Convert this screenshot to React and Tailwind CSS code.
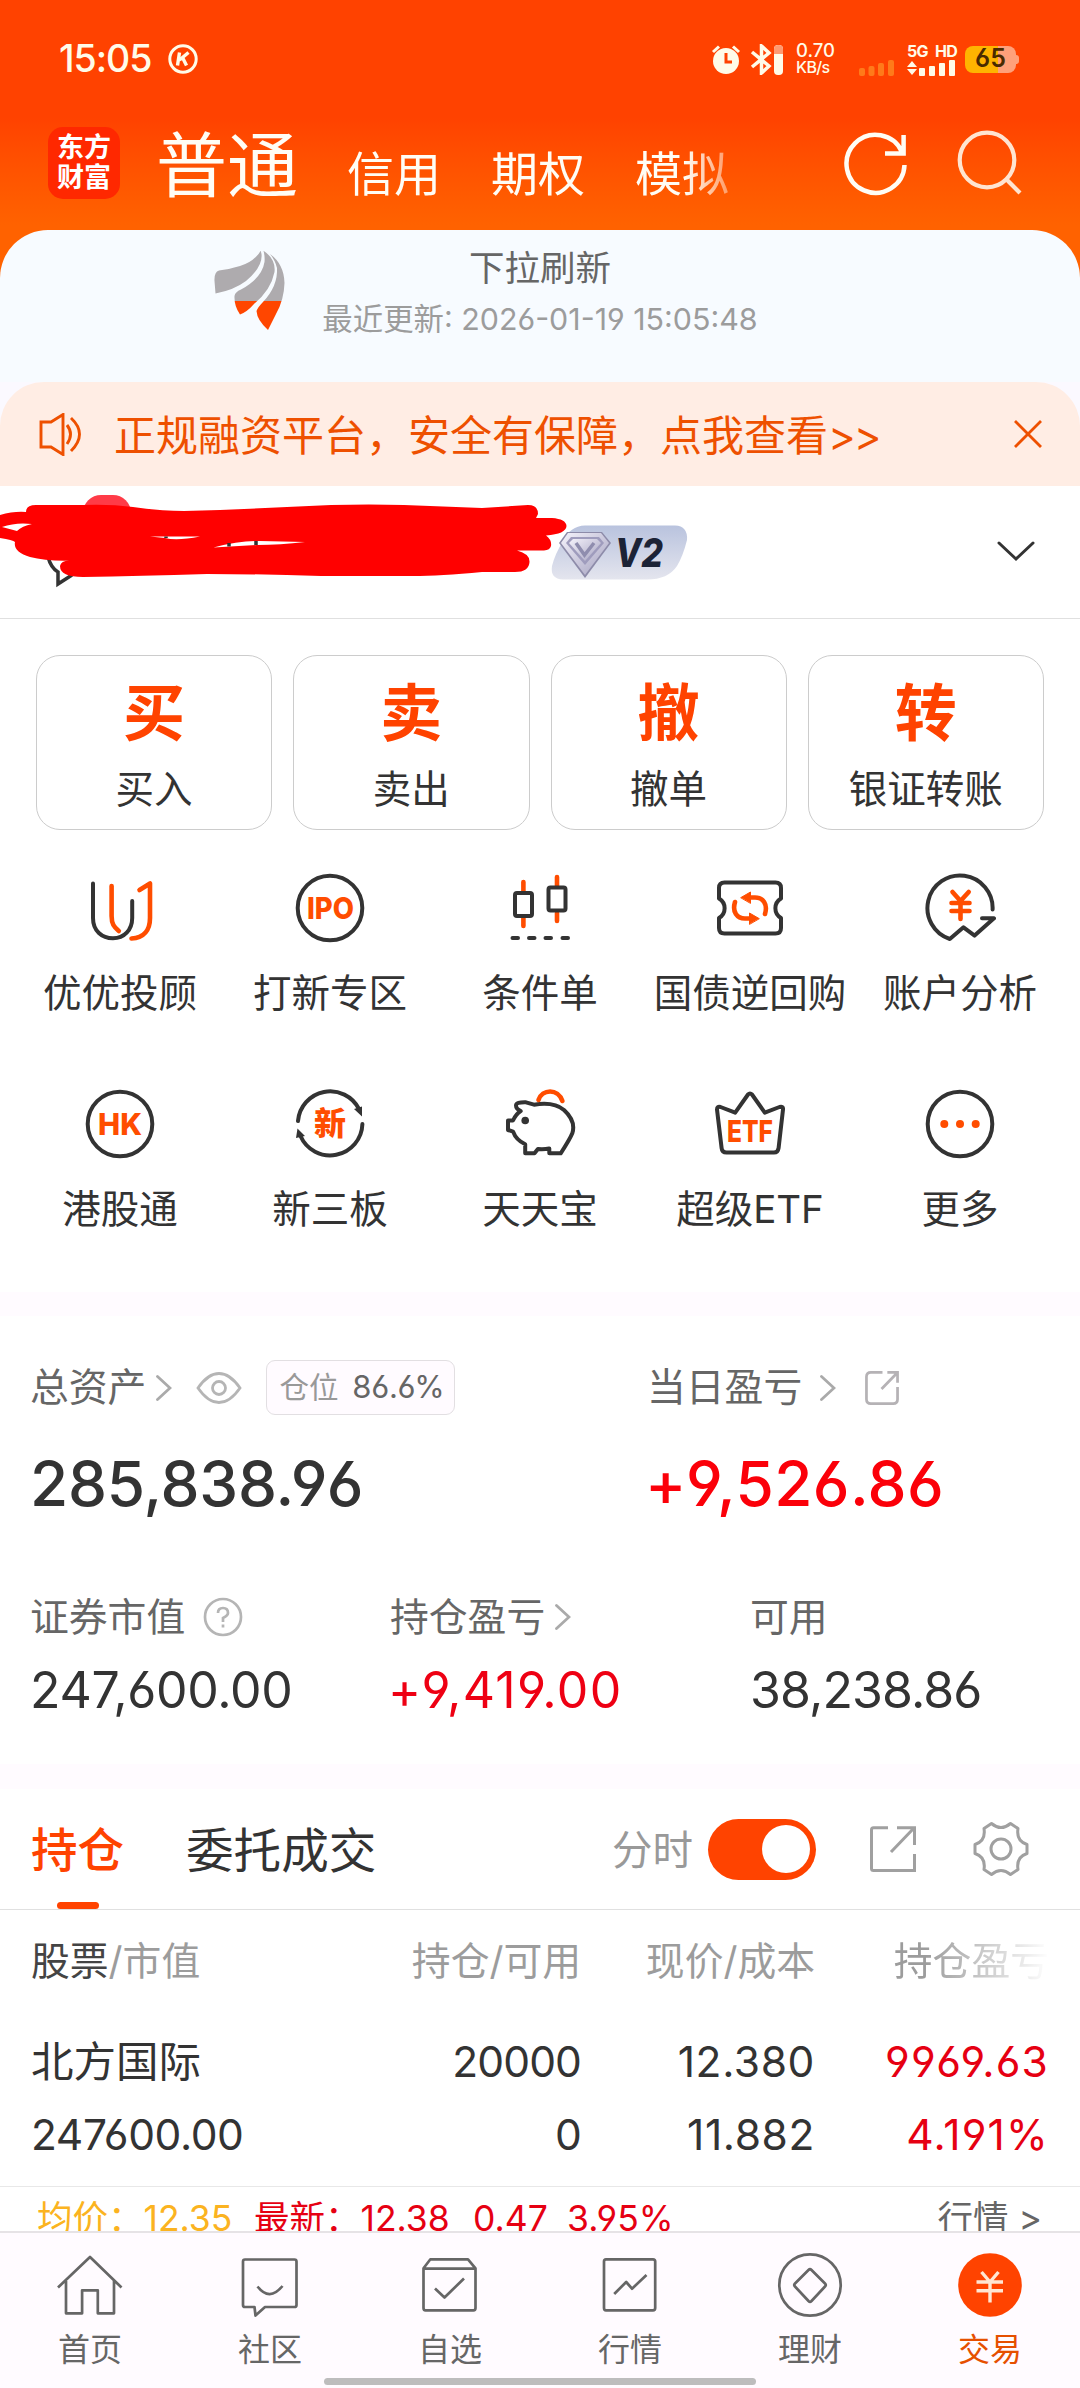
import { useState } from "react";

const dark = { fill: "none", stroke: "#333", strokeWidth: 4, strokeLinecap: "round", strokeLinejoin: "round" };
const hot = { fill: "none", stroke: "#ff4d00", strokeWidth: 4.6, strokeLinecap: "round", strokeLinejoin: "round" };
const hotText = { fill: "#ff4d00", textAnchor: "middle", fontWeight: 800, lengthAdjust: "spacingAndGlyphs" };

const menuIcons = {
    youyou: (
        <>
            <path {...dark} d="M9 11.5V46C9 59 18 66.3 29 66.3S48.2 58 48.2 46V29" />
            <path {...hot} d="M27.6 14V44C27.6 52 30 55 34.8 59M55.5 18L66 11.5V46C66 58 60 66 47.5 66.5" />
        </>
    ),
    ipo: (
        <>
            <circle {...dark} cx="36" cy="36" r="32.3" />
            <text {...hotText} x="36.500" y="47" fontSize="30" textLength="47">IPO</text>
        </>
    ),
    candle: (
        <>
            <path {...hot} d="M19.4 10V19M19.4 46V54M53 5V14M53 41V49" />
            <rect {...dark} x="11" y="21" width="17" height="23" rx="2" />
            <rect {...dark} x="44.5" y="15.5" width="17" height="23" rx="2" />
            <path {...dark} d="M8.5 66H14M25 66H30.5M41.5 66H47M58.5 66H64" />
        </>
    ),
    bond: (
        <>
            <path {...dark} d="M10.5 10.5H61.5Q67 10.5 67 16V26.5C59.5 31 59.5 41.5 67 46V56Q67 61.5 61.5 61.5H10.5Q5 61.5 5 56V46C12.5 41.5 12.5 31 5 26.5V16Q5 10.5 10.5 10.5Z" />
            <path {...hot} d="M51 42C54 32 49 25.5 41 25.5H34M21 30C18 40 23 46.5 31 46.5H38" />
            <path {...hot} strokeWidth="1" fill="#ff4d00" d="M27 25.5L36.5 20V31ZM45 46.5L35.5 41V52Z" />
        </>
    ),
    account: (
        <>
            <path {...dark} d="M68.6 37.5A32.6 32.6 0 1 0 25.8 67L39.5 55.3L50.6 63.6L70 46.3H58" />
            <path {...hot} d="M28.5 20L36.5 29L44.7 20M36.5 29V47M27.5 31H45.5M27.5 39H45.5" />
        </>
    ),
    hk: (
        <>
            <circle {...dark} cx="36" cy="36" r="32.3" />
            <text {...hotText} x="36" y="47" fontSize="30" textLength="44">HK</text>
        </>
    ),
    xin: (
        <>
            <path {...dark} d="M4 33A32.3 32.3 0 0 1 65 21M68.4 36A32.3 32.3 0 0 1 6.5 48" />
            <path fill="#333" d="M60 21L68 18.5L68 28.5ZM3.5 40.5L2 50L11 48Z" />
            <text {...hotText} x="36" y="47" fontSize="32">新</text>
        </>
    ),
    pig: (
        <>
            <path {...dark} d="M12 17.5Q12 14 22 14.3L30 16.7Q50 13.5 60 22Q72 33 68.4 45Q66 51 56.7 65.3H45.3V60.5Q40 61.5 33.9 61L30.5 65.3H21.2V56.3Q12 52 9.1 43.7L4 42V32.5H9Q12 26 16.7 23Q12 21 12 17.5Z" />
            <circle cx="21.2" cy="32.5" r="3.8" fill="#333" />
            <path {...hot} d="M34.5 12C38 1 54 0 58.4 13" />
        </>
    ),
    etf: (
        <>
            <path {...dark} d="M7.6 60L3 21.5Q3 18 6.5 19L21.2 24.7L34 6.5Q36 4.5 38 6.5L50.8 24.7L65.5 19Q69.5 18 69 21.5L64.6 60Q64 64.5 60 64.5H12.5Q8 64.5 7.6 60Z" />
            <text {...hotText} x="36" y="53.5" fontSize="30" textLength="46">ETF</text>
        </>
    ),
    more: (
        <>
            <circle {...dark} cx="36" cy="36" r="32.3" />
            <g fill="#ff4d00">
                <circle cx="20.3" cy="36" r="4" />
                <circle cx="36" cy="36" r="4" />
                <circle cx="51.7" cy="36" r="4" />
            </g>
        </>
    ),
};

const menu = [
    ["youyou", "优优投顾"],
    ["ipo", "打新专区"],
    ["candle", "条件单"],
    ["bond", "国债逆回购"],
    ["account", "账户分析"],
    ["hk", "港股通"],
    ["xin", "新三板"],
    ["pig", "天天宝"],
    ["etf", "超级ETF"],
    ["more", "更多"],
];

const actions = [
    ["买", "买入"],
    ["卖", "卖出"],
    ["撤", "撤单"],
    ["转", "银证转账"],
];

const navLine = { fill: "none", stroke: "#666", strokeWidth: 2.7, strokeLinejoin: "round" };

const navItems = [
    { label: "首页", icon: <path {...navLine} d="M4 38.5L36 8L67.5 38.5M12 32V64.3H28.1V41.3H43.8V64.3H60V32" /> },
    { label: "社区", icon: <path {...navLine} d="M11 10.5H60.5Q62.5 10.5 62.5 12.5V56Q62.5 58 60.5 58H31L21.5 66.5L20.5 58H11Q9 58 9 56V12.5Q9 10.5 11 10.5ZM23.5 37.5Q35.5 53 48.5 37" /> },
    { label: "自选", icon: <path {...navLine} d="M9.5 19.3L16.4 10.3H54L61.5 19.3V59Q61.5 61.3 59.5 61.3H11.5Q9.5 61.3 9.5 59ZM9.5 19.6H61.5M21 39.5L30.5 48.5L50 29.5" /> },
    { label: "行情", icon: <path {...navLine} d="M12 10.3H59Q61.2 10.3 61.2 12.5V59Q61.2 61.3 59 61.3H12Q10 61.3 10 59V12.5Q10 10.3 12 10.3ZM20.2 45L32.2 33L38 39.7L52.5 26" /> },
    { label: "理财", icon: <><circle {...navLine} cx="36" cy="36" r="30.7" /><path {...navLine} d="M34.5 21Q36 19.5 37.5 21L51 34.5Q52.5 36 51 37.5L37.5 52Q36 53.5 34.5 52L21 37.5Q19.5 36 21 34.5Z" /></> },
    { label: "交易", active: true, icon: <><circle cx="36" cy="36" r="31.8" fill="#ff4300" /><path fill="none" stroke="#ffe6d2" strokeWidth="3.4" d="M27.5 23L36 33L44.5 23M36 33V53.5M22.5 33H49M22.5 41.7H49" /></> },
];

const Arrow = ({ className = "" }) => (
    <svg className={"h-7 w-4 " + className} viewBox="0 0 16 28" fill="none" stroke="#aaa" strokeWidth="2.8" strokeLinecap="round">
        <path d="M1.5 2.5L14 14L1.5 25.5" />
    </svg>
);

const StatusBar = () => (
    <div className="flex h-[118px] items-center pl-[59px] text-[#fffbe8]">
        <span className="w-[109px] text-[37.5px] font-medium tracking-[-1px]">15:05</span>
        <svg className="h-[30px] w-[30px]" viewBox="0 0 30 30" fill="none" stroke="currentColor" strokeWidth="3">
            <circle cx="15" cy="15" r="13.2" />
            <path strokeWidth="3.4" d="M11.5 8.5L9.5 21.5M20.5 8.5L11.5 16M14.5 13.5L18.5 21.5" />
        </svg>
        <svg className="ml-[513px] h-[30px] w-[30px]" viewBox="0 0 30 30">
            <circle cx="15" cy="17" r="13" fill="currentColor" />
            <path d="M15 9V18H21" fill="none" stroke="#ff4200" strokeWidth="3" />
            <path d="M2 8L8 2.5M28 8L22 2.5" stroke="currentColor" strokeWidth="3" />
        </svg>
        <svg className="ml-[9px] h-[31px] w-[33px]" viewBox="0 0 33 31">
            <path d="M2 8L19 22L11.5 29V2L19 9L2 23" fill="none" stroke="currentColor" strokeWidth="3.500" />
            <rect x="24" y="1" width="9" height="30" rx="4" fill="currentColor" />
            <path d="M24 10V5Q24 1 28.5 1T33 5V10Z" fill="#ff9a70" />
        </svg>
        <div className="ml-[13px] flex w-10 flex-col text-[18.5px] leading-[17px] font-medium">
            <span>0.70</span>
            <span className="text-[16px] tracking-[-0.6px]">KB/s</span>
        </div>
        <svg className="mt-[17px] ml-[23px] h-4 w-9" viewBox="0 0 36 16" fill="#ff7a1a">
            <rect x="0" y="8" width="6" height="8" rx="2" />
            <rect x="9.5" y="6" width="6" height="10" rx="2" />
            <rect x="19" y="3" width="6" height="13" rx="2" />
            <rect x="29" y="0" width="6" height="16" rx="2" />
        </svg>
        <div className="ml-[12px] flex w-[50px] flex-col">
            <span className="text-[16px] leading-[17px] font-bold tracking-[-0.7px] [word-spacing:4px] whitespace-nowrap">5G HD</span>
            <svg className="h-4 w-12" viewBox="0 0 48 16" fill="currentColor">
                <path d="M0 7L5 1L10 7ZM0 9L5 15L10 9Z" />
                <rect x="12" y="8" width="6" height="8" rx="1" />
                <rect x="22" y="6" width="6" height="10" rx="1" />
                <rect x="32" y="3" width="6" height="13" rx="1" />
                <rect x="42" y="0" width="6" height="16" rx="1" />
            </svg>
        </div>
        <div className="ml-[8px] flex items-center">
            <div className="flex h-[27px] w-[51px] items-center justify-center rounded-lg bg-linear-to-r from-[#ffb400] from-65% to-[#ffa07a] to-65% text-[25px] font-semibold text-[#4a2a00]">65</div>
            <div className="h-[9px] w-[3px] rounded-r bg-[#ffa07a]"></div>
        </div>
    </div>
);

const Header = () => (
    <div className="flex h-[112px] items-start text-[#fffdf5]">
        <div className="mt-[9px] ml-12 flex h-[72px] w-[72px] shrink-0 flex-col items-center justify-center rounded-[15px] bg-[#ff2800] text-[27px] leading-[30px] font-bold text-white">
            <span>东方</span>
            <span>财富</span>
        </div>
        <div className="flex h-[92px] w-[620px] shrink-0 items-baseline mask-r-from-[565px] mask-r-to-[640px] pl-9 whitespace-nowrap">
            <span className="w-[191px] shrink-0 text-[71px] leading-[94px]">普通</span>
            <span className="w-[144px] shrink-0 text-[47px]">信用</span>
            <span className="w-[144px] shrink-0 text-[47px]">期权</span>
            <span className="text-[47px]">模拟</span>
        </div>
        <svg className="mt-3 ml-[103px] h-[68px] w-[66px]" viewBox="843 130 66 68" fill="none" stroke="currentColor" strokeWidth="4.5">
            <path d="M904.5 165A29 29 0 1 1 902 152M903.6 135V153.5H885" />
        </svg>
        <svg className="mt-3 ml-12 h-[68px] w-[66px]" viewBox="957 130 66 68" fill="none" stroke="#ffe4d0" strokeWidth="4.2">
            <circle cx="987" cy="160" r="27.3" />
            <path d="M1006.6 179.5L1020 193" />
        </svg>
    </div>
);

const AccountRow = () => (
    <div className="relative flex h-[133px] items-center justify-end border-b border-[#e0e0e0] pr-[44px]">
        {/* account name is scribbled over by the user */}
        <svg className="absolute top-0 left-0 h-[110px] w-[700px]" viewBox="0 0 700 110">
            <defs>
                <linearGradient id="vip" x1="0" y1="0" x2="0" y2="1">
                    <stop offset="0" stopColor="#b9c3de" />
                    <stop offset="1" stopColor="#e4e5ee" />
                </linearGradient>
                <linearGradient id="gem" x1="0" y1="0" x2="1" y2="1">
                    <stop offset="0" stopColor="#f4f2fb" />
                    <stop offset="1" stopColor="#a5a2c0" />
                </linearGradient>
            </defs>
            <rect x="83" y="9" width="48" height="40" rx="18" fill="#ff3b47" />
            <path d="M48 71Q51 82 58 86V98L72 89" fill="none" stroke="#333" strokeWidth="3.5" />
            <path fill="red" d="M0 29Q14 25 26 26Q26 19 36 19H83Q110 18 133 21Q160 25 184 25L220 24L331 19Q370 18 404 19L482 22L528 19Q538 19 538 28L536 32H552Q566 33 566.5 40Q566 48 546 49.5Q552 54 551 60Q550 64 544 64.6H517Q530 68 529.5 76Q529 86 515 86H482Q440 90 413 90H321Q260 88 207 88Q140 90 83 91Q60 91 60 80Q61 75 69 74.6Q45 75 30 71Q13 66 15 56Q13 54 0 52Z" />
            <path fill="white" d="M2 41Q16 36 32 38Q22 40 17 45ZM213.5 61.5Q240 54 260 55L305 56Q280 59 257 59ZM150 50.5H200Q177 55 165 52Z" />
            <path stroke="#333" strokeWidth="3.5" d="M229 57V60.5M256 55V59M166 50.5V52" />
            <path fill="url(#vip)" d="M585 39.5H675Q688 40 687 54Q683 70 677 80Q668 93.5 647 93.5H563Q550 93 552 80Q555 68 563 55Q570 40 585 39.5Z" />
            <path fill="#8d8ba9" d="M567 46H602L611 57L585 92L559 57Z" />
            <path fill="url(#gem)" d="M568 47H601L609 57L585 89L561 57Z" />
            <path fill="#9f9cbd" d="M571 51H599L604 57L585 79L566 57Z" />
            <path fill="url(#gem)" d="M573 53H597L601 57L585 75L569 57Z" />
            <path fill="none" stroke="#8f8dae" strokeWidth="3.5" d="M576 57L584.5 69L594 57" />
            <text x="639" y="81" textAnchor="middle" fontSize="40" fontWeight="800" fontStyle="italic" fill="#1c2336" textLength="48" lengthAdjust="spacingAndGlyphs">V2</text>
        </svg>
        <svg className="h-6 w-10" viewBox="0 0 40 24" fill="none" stroke="#333" strokeWidth="3" strokeLinecap="round">
            <path d="M3 3L20 19L37 3" />
        </svg>
    </div>
);

const Assets = () => (
    <div className="h-[448px] text-[38.8px] text-[#666]">
        <div className="flex h-[143px] items-center pl-[30px]">
            <div className="flex w-[617px] items-center">
                <span>总资产</span>
                <Arrow className="ml-2.5" />
                <svg className="ml-6 h-8 w-[46px]" viewBox="0 0 46 32" fill="none" stroke="#b5b5b5" strokeWidth="2.8">
                    <path d="M2 16Q12 1.5 23 1.5T44 16Q34 30.5 23 30.5T2 16Z" />
                    <circle cx="23" cy="16" r="6.5" />
                </svg>
                <div className="ml-[24px] flex h-[55px] w-[189px] items-center justify-between rounded-[9px] border border-[#e2dfe2] bg-[#fffbff] pr-2.5 pl-3 text-[29.5px]">
                    <span className="text-[#999]">仓位</span>
                    <span className="text-[31px] tracking-[-0.3px]">86.6%</span>
                </div>
            </div>
            <span>当日盈亏</span>
            <Arrow className="ml-[18px]" />
            <svg className="ml-[29px] h-[34px] w-[34px]" viewBox="0 0 35 35" fill="none" stroke="#b5b2b5" strokeWidth="2.8">
                <path d="M18 1.5H6Q1.5 1.5 1.5 6V29Q1.5 33.5 6 33.5H29Q33.5 33.5 33.5 29V16.5M33.5 12V1.5H23M33 2L17 18.5" />
            </svg>
        </div>
        <div className="flex h-12 items-center pl-[30px] text-[62px] font-medium whitespace-nowrap">
            <span className="w-[615px] tracking-[-0.2px] text-[#333]">285,838.96</span>
            <span className="tracking-[0.4px] text-[#fb0009]">+9,526.86</span>
        </div>
        <div className="mt-[73px] flex h-[74px] items-center pl-[30px]">
            <div className="flex w-[360px] items-center">
                <span>证券市值</span>
                <svg className="ml-[18px] h-10 w-10" viewBox="0 0 40 40" fill="none" stroke="#b5b5b5" strokeWidth="2.7">
                    <circle cx="20" cy="20" r="18" />
                    <path d="M15 16Q15 11 20 11T25 16Q25 18.5 20 21V25M20 27.5V30.5" />
                </svg>
            </div>
            <div className="flex w-[360px] items-center">
                <span>持仓盈亏</span>
                <Arrow className="ml-2.5" />
            </div>
            <span>可用</span>
        </div>
        <div className="flex items-center pt-2 pl-[30px] text-[50px] leading-[56px] text-[#333]">
            <span className="w-[358px] tracking-[-0.3px]">247,600.00</span>
            <span className="w-[362px] tracking-[1.3px] text-[#ee0013]">+9,419.00</span>
            <span className="tracking-[-0.9px]">38,238.86</span>
        </div>
    </div>
);

const Holdings = () => {

    const [showChart, setShowChart] = useState(true);

    return (
        <div className="h-[442px] overflow-hidden">
            <div className="flex h-[121px] items-center border-b border-[#e0e0e0] pl-[31px]">
                <div className="relative flex h-full w-[155px] items-center pt-1 text-[46.5px] font-medium text-[#ff4300]">
                    持仓
                    <div className="absolute bottom-0 left-[26px] h-[7px] w-[42px] rounded-full bg-[#ff4300]"></div>
                </div>
                <span className="w-[426px] pt-1 text-[47.6px] text-[#333]">委托成交</span>
                <span className="w-24 pt-1 text-[40.5px] text-[#999]">分时</span>
                <button className={"flex h-[61px] w-[108px] items-center rounded-full px-1.5 " + (showChart ? "justify-end bg-[#ff4300]" : "bg-gray-300")} onClick={() => setShowChart(!showChart)}>
                    <div className="h-12 w-12 rounded-full bg-white"></div>
                </button>
                <svg className="ml-[54px] h-[46px] w-[46px]" viewBox="0 0 46 46" fill="none" stroke="#a0a0a0" strokeWidth="3">
                    <path d="M18 1.7H3.5Q1.5 1.7 1.5 3.7V42.5Q1.5 44.5 3.5 44.5H44.5V28M44.5 19V1.7H27M44 2L21 26" />
                </svg>
                <svg className="ml-[57px] h-14 w-14" viewBox="-28 -28 56 56" fill="none" stroke="#a0a0a0" strokeWidth="3">
                    <path strokeLinejoin="round" d="M-9.5 -25.5Q0 -17.500 9.500 -25.5L17 -20.5Q15 -8 26 -4.500V4.500Q15 8 17 20.5L9.500 25.5Q0 17.500 -9.500 25.5L-17 20.5Q-15 8 -26 4.500V-4.500Q-15 -8 -17 -20.5Z" />
                    <circle r="10" />
                </svg>
            </div>

            <div className="flex h-[100px] items-center pt-0.5 pr-[31px] pl-[31px] text-[38.8px] text-[#9c9c9c]">
                <div className="w-[270px]"><span className="text-[#444]">股票</span>/市值</div>
                <div className="w-[280px] text-right">持仓/可用</div>
                <div className="w-[234px] text-right">现价/成本</div>
                <div className="flex-1 mask-r-from-[110px] mask-r-to-[235px] text-right">持仓盈亏</div>
            </div>

            <div className="flex h-[176px] pt-[15px] pr-[31px] pl-[31px] text-[42.5px] leading-[73px] whitespace-nowrap text-[#333]">
                <div className="w-[270px] tracking-[-0.4px]">
                    <div className="tracking-normal">北方国际</div>
                    <div>247600.00</div>
                </div>
                <div className="w-[280px] text-right tracking-[-0.9px]">
                    <div>20000</div>
                    <div>0</div>
                </div>
                <div className="w-[234px] text-right tracking-[0.6px]">
                    <div>12.380</div>
                    <div>11.882</div>
                </div>
                <div className="flex-1 text-right tracking-[1.2px] text-[#e60012]">
                    <div>9969.63</div>
                    <div>4.191%</div>
                </div>
            </div>

            <div className="flex h-16 items-center border-t border-[#e8e8e8] pr-[38px] pl-[37px] text-[35.5px] whitespace-nowrap">
                <span className="w-[217px] text-[#fbb320]">均价：12.35</span>
                <span className="w-[219px] text-[#e60012]">最新：12.38</span>
                <span className="w-[94px] text-[#e60012]">0.47</span>
                <span className="flex-1 text-[#e60012]">3.95%</span>
                <span className="text-[#666]">行情 &gt;</span>
            </div>
        </div>
    );
};

const App = () => {
    return (
        <div className="flex h-[2388px] w-[1080px] flex-col overflow-hidden bg-white font-[Inter,'Noto_Sans_CJK_SC',sans-serif] [font-feature-settings:'cv03','cv04']">
            <div className="h-[382px] bg-linear-to-b from-[#ff4200] from-[118px] to-[#ff6200] to-[225px]">
                <StatusBar />
                <Header />
                <div className="flex h-[152px] rounded-t-[48px] bg-[#f7fbff]">
                    <svg className="mt-5 ml-[214px] h-[82px] w-[72px]" viewBox="0 0 72 82" fill="url(#wing)">
                        <defs>
                            <linearGradient id="wing" gradientUnits="userSpaceOnUse" x1="0" y1="0" x2="0" y2="82">
                                <stop offset="0.62" stopColor="#aeabae" />
                                <stop offset="0.62" stopColor="#ff4600" />
                            </linearGradient>
                        </defs>
                        <path d="M46.7 .7Q40 12 26 16Q14 19.5 5 20.5Q0 22 .5 31L1.5 43.5Q20 40 32 31Q49 17 47.5 4Z" />
                        <path d="M49.5 .7Q62 9 60.5 22Q57 40 40 54Q33 62 26 64.5Q20 56 20.5 46Q21 42 27 39.5Q48 28 50.5 12Q51 6 49.5 .7Z" />
                        <path d="M56 4Q70 14 70.5 33Q70 50 62 64L54 80Q43 70 42.5 61Q44 57 49 52Q64 36 63 18Q61 10 56 4Z" />
                    </svg>
                    <div className="ml-[35px] flex w-[438px] flex-col items-center pt-[13px] whitespace-nowrap">
                        <span className="text-[35.5px] leading-[52px] text-[#666]">下拉刷新</span>
                        <span className="text-[30.4px] leading-[49px] text-[#9c9c9c]">最近更新: 2026-01-19 15:05:48</span>
                    </div>
                </div>
            </div>

            <div className="bg-[#fbf9ff]">
                <div className="flex h-[104px] items-center rounded-t-[44px] bg-[#ffede4] pl-[39px] text-[#ee5000]">
                    <svg className="h-[43px] w-[43px]" viewBox="0 0 43 43" fill="none" stroke="currentColor" strokeWidth="2.9">
                        <path d="M2 9H12L24 1.5V41.5L12 34H2ZM28 12Q35 21 28 31M32 5Q49 21 32 38" />
                    </svg>
                    <span className="ml-[32px] flex-1 pt-0.5 text-[42px] whitespace-nowrap">正规融资平台，安全有保障，点我查看<span className="tracking-[-2px]">&gt;&gt;</span></span>
                    <svg className="mr-[38px] h-7 w-7" viewBox="0 0 28 28" stroke="currentColor" strokeWidth="2.8">
                        <path d="M1 1L27 27M27 1L1 27" />
                    </svg>
                </div>
            </div>

            <AccountRow />

            <div className="grid grid-cols-4 gap-[21px] px-9 pt-9">
                {
                    actions.map(([mark, label]) => (
                        <div key={mark} className="flex h-[175px] flex-col items-center rounded-3xl border border-[#ccc] pt-[18px]">
                            <span className="text-[62px] leading-[80px] font-bold text-[#ff4300]">{mark}</span>
                            <span className="pt-0.5 text-[38.5px] leading-[66px] text-[#333]">{label}</span>
                        </div>
                    ))
                }
            </div>

            <div className="grid h-[462px] grid-cols-5 content-start px-[15px] pt-[42px]">
                {
                    menu.map(([icon, label]) => (
                        <div key={icon} className="flex h-[216px] flex-col items-center">
                            <svg className="h-[72px] w-[72px]" viewBox="0 0 72 72">{menuIcons[icon]}</svg>
                            <span className="mt-5 text-[38.5px] leading-[58px] whitespace-nowrap text-[#333]">{label}</span>
                        </div>
                    ))
                }
            </div>

            <div className="h-6 bg-[#fffbff]"></div>
            <Assets />
            <div className="h-[25px] bg-[#fffbff]"></div>
            <Holdings />

            <div className="relative flex h-[157px] border-t-2 border-[#e6e3e6] bg-[#fffbff] pt-4">
                {
                    navItems.map(({ label, icon, active }) => (
                        <div key={label} className="flex flex-1 flex-col items-center">
                            <svg className="h-[72px] w-[72px]" viewBox="0 0 72 72">{icon}</svg>
                            <span className={"mt-[9px] text-[32px] leading-[40px] " + (active ? "text-[#e65000]" : "text-[#666]")}>{label}</span>
                        </div>
                    ))
                }
                <div className="absolute bottom-[3px] left-[324px] h-[7px] w-[432px] rounded-full bg-[#bdbdbd]"></div>
            </div>
        </div>
    );
};

export default App;
